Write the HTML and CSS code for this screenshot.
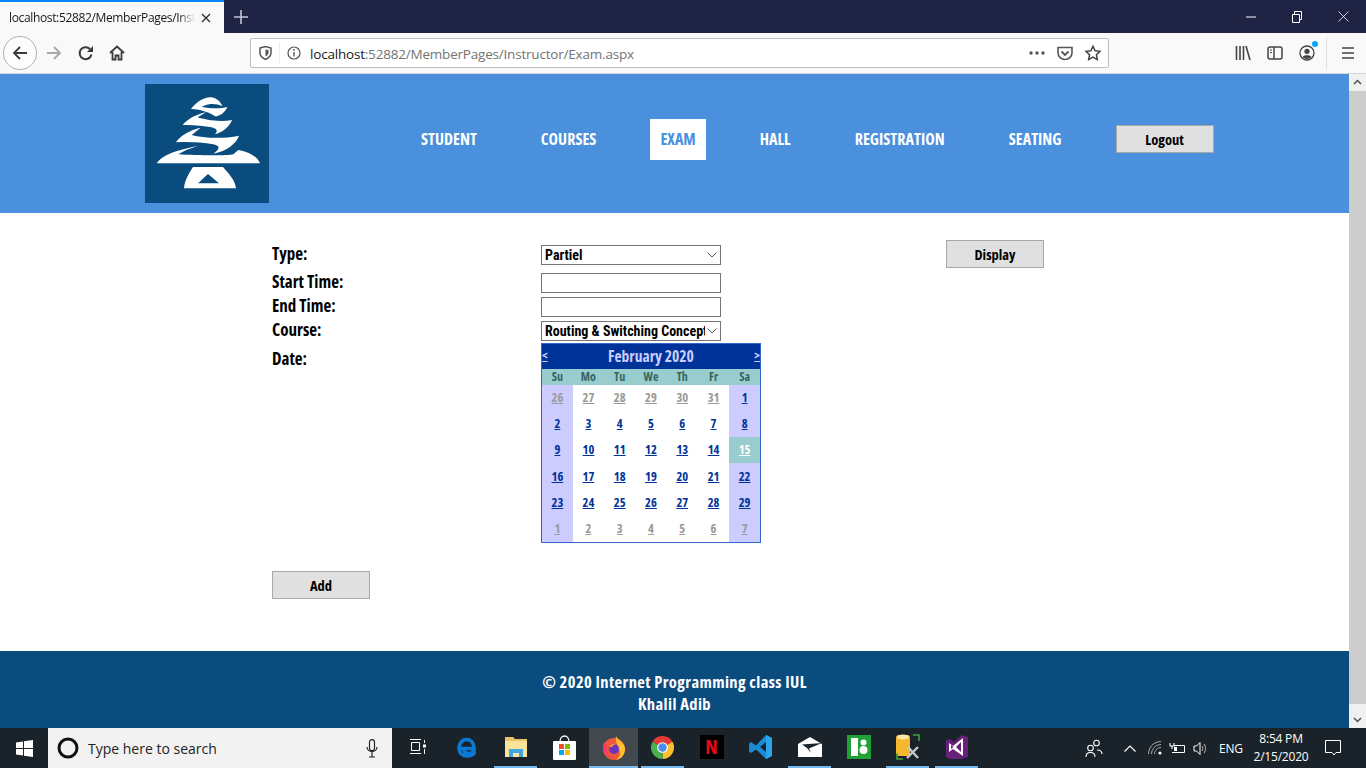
FILE: index.html
```html
<!DOCTYPE html>
<html lang="en">
<head>
    <meta charset="UTF-8">
    <title>Exam</title>
    <link rel="stylesheet" href="styles.css">
</head>
<body>
    <!-- Browser tabs -->
    <div class="tabstrip">
        <div class="browser-tab">
            <span class="tab-title">localhost:52882/MemberPages/Inst</span>
            <svg class="tab-close" width="10" height="10" viewBox="0 0 10 10"><path d="M1 1l8 8M9 1l-8 8" stroke="#333" stroke-width="1.4"/></svg>
        </div>
        <svg class="new-tab" width="14" height="14" viewBox="0 0 14 14"><path d="M7 0v14M0 7h14" stroke="#c4c6d2" stroke-width="1.6"/></svg>
        <div class="window-controls">
            <svg width="10" height="10" viewBox="0 0 10 10"><path d="M0 5h10" stroke="#fff"/></svg>
            <svg width="10" height="12" viewBox="0 0 10 12"><path d="M.5 3.5h7v8h-7zM2.500 3.500v-3h7v8h-2" fill="none" stroke="#fff"/></svg>
            <svg width="11" height="11" viewBox="0 0 11 11"><path d="M.5.500l10 10M10.500.500l-10 10" stroke="#fff" stroke-width=".8"/></svg>
        </div>
    </div>

    <!-- Browser toolbar -->
    <div class="toolbar">
        <div class="back-btn">
            <svg width="16" height="16" viewBox="0 0 16 16"><path d="M15 8H2M8 2L2 8l6 6" fill="none" stroke="#3a3a3c" stroke-width="1.800"/></svg>
        </div>
        <svg class="forward-icon" width="16" height="16" viewBox="0 0 16 16"><path d="M1 8h13M8 2l6 6-6 6" fill="none" stroke="#a8a8aa" stroke-width="1.800"/></svg>
        <svg class="reload-icon" width="16" height="16" viewBox="0 0 16 16"><path d="M13.500 9.500A6 6 0 1 1 12 4" fill="none" stroke="#3a3a3c" stroke-width="2"/><path d="M15 1v6H9z" fill="#3a3a3c"/></svg>
        <svg class="home-icon" width="16" height="16" viewBox="0 0 16 16"><path d="M1 8l7-6.500L15 8M3.500 7v7.500h3v-4h3v4h3V7" fill="none" stroke="#3a3a3c" stroke-width="1.800"/></svg>
        <div class="urlbar">
            <svg class="shield-icon" width="13" height="14" viewBox="0 0 13 14"><path d="M1 2l5.500-1.500L12 2v5c0 3-2.500 5-5.500 6.500C3.500 12 1 10 1 7z" fill="none" stroke="#555" stroke-width="1.500"/><path d="M6.500 3.500L9.500 4v3c0 1.500-1.300 2.700-3 3.500z" fill="#555"/></svg>
            <i class="url-sep"></i>
            <svg class="info-icon" width="14" height="14" viewBox="0 0 14 14"><circle cx="7" cy="7" r="6" fill="none" stroke="#555" stroke-width="1.200"/><path d="M7 6v4.500" stroke="#555" stroke-width="1.400"/><circle cx="7" cy="3.900" r=".9" fill="#555"/></svg>
            <span class="url-text"><b>localhost</b>:52882/MemberPages/Instructor/Exam.aspx</span>
            <span class="url-actions">
                <svg width="16" height="4" viewBox="0 0 16 4"><circle cx="2" cy="2" r="1.700" fill="#555"/><circle cx="8" cy="2" r="1.700" fill="#555"/><circle cx="14" cy="2" r="1.700" fill="#555"/></svg>
                <svg width="16" height="15" viewBox="0 0 16 15"><path d="M1 1.500h14V7c0 3.500-3.500 6.500-7 6.500S1 10.500 1 7z" fill="none" stroke="#555" stroke-width="1.600"/><path d="M4.500 5.500L8 9l3.500-3.500" fill="none" stroke="#555" stroke-width="1.800"/></svg>
                <svg width="16" height="16" viewBox="0 0 16 16"><path d="M8 1.200l2.100 4.500 4.900.6-3.600 3.400.9 4.900L8 12.200l-4.300 2.400.9-4.900L1 6.300l4.900-.6z" fill="none" stroke="#444" stroke-width="1.500"/></svg>
            </span>
        </div>
        <div class="toolbar-right">
            <svg width="16" height="16" viewBox="0 0 16 16"><path d="M1.500 1v14M5 1v14M8.500 1v14M11 1l4 14" fill="none" stroke="#444" stroke-width="1.600"/></svg>
            <svg width="16" height="16" viewBox="0 0 16 16"><rect x="1" y="2" width="14" height="12" rx="2" fill="none" stroke="#444" stroke-width="1.500"/><path d="M7 2v12" stroke="#444" stroke-width="1.500"/><path d="M3 5h2M3 7.500h2" stroke="#444"/></svg>
            <span class="account-icon">
                <svg width="16" height="16" viewBox="0 0 16 16"><circle cx="8" cy="8" r="7" fill="none" stroke="#444" stroke-width="1.300"/><circle cx="8" cy="6.300" r="2.600" fill="#444"/><path d="M3.500 12c1-2.500 8-2.500 9 0-2 2.500-7 2.500-9 0z" fill="#444"/></svg>
                <i class="account-dot"></i>
            </span>
            <i class="toolbar-sep"></i>
            <svg width="14" height="14" viewBox="0 0 14 14"><path d="M1 2h12M1 7h12M1 12h12" stroke="#444" stroke-width="1.700"/></svg>
        </div>
    </div>

    <div class="viewport">
        <div class="page">
            <header class="site-header">
                <svg class="logo" viewBox="45 27 372 357">
                    <rect x="45" y="27" width="372" height="357" fill="#0b4c7f"/>
                    <g fill="#fff">
                        <path d="M183 102C200 80 225 64 245 67 262 70 272 82 277 93 262 87 240 84 222 92L215 96C240 100 270 102 292 96 285 112 270 124 255 124 245 115 215 103 183 102Z"/>
                        <path d="M158 150C175 130 200 118 228 112L203 127C222 134 270 142 306 135 300 152 280 172 255 178 264 168 262 162 245 157 220 152 190 149 158 150Z"/>
                        <path d="M138 202C150 182 180 165 212 158L185 180C220 190 280 192 327 182 320 205 290 228 250 236 270 222 272 213 250 208 215 202 175 200 138 202Z"/>
                        <path d="M80 265C95 240 140 225 205 212 175 222 155 230 145 238 195 241 290 243 310 238L325 225C360 232 382 245 390 265Z"/>
                        <path fill-rule="evenodd" d="M162 340C164 316 176 296 189 276H279C296 296 316 316 318 340ZM204 325H267L234 297Z"/>
                    </g>
                </svg>
                <nav class="main-nav">
                    <a class="nav-link">STUDENT</a>
                    <a class="nav-link">COURSES</a>
                    <a class="nav-link active">EXAM</a>
                    <a class="nav-link">HALL</a>
                    <a class="nav-link">REGISTRATION</a>
                    <a class="nav-link">SEATING</a>
                    <button class="btn logout-btn">Logout</button>
                </nav>
            </header>

            <main class="content">
                <form class="exam-form">
                    <label class="field-label">Type:</label>
                    <select class="field select-field"><option>Partiel</option></select>
                    <button type="button" class="btn display-btn">Display</button>

                    <label class="field-label">Start Time:</label>
                    <input class="field" type="text">
                    <span></span>

                    <label class="field-label">End Time:</label>
                    <input class="field" type="text">
                    <span></span>

                    <label class="field-label">Course:</label>
                    <select class="field"><option>Routing &amp; Switching Concepts</option></select>
                    <span></span>

                    <label class="field-label date-label">Date:</label>
                    <table class="calendar">
                        <thead>
                            <tr class="cal-title">
                                <th><a>&lt;</a></th>
                                <th colspan="5">February 2020</th>
                                <th class="cal-next"><a>&gt;</a></th>
                            </tr>
                            <tr class="cal-days">
                                <th>Su</th><th>Mo</th><th>Tu</th><th>We</th><th>Th</th><th>Fr</th><th>Sa</th>
                            </tr>
                        </thead>
                        <tbody>
                            <tr>
                                <td class="weekend other"><a>26</a></td><td class="other"><a>27</a></td><td class="other"><a>28</a></td><td class="other"><a>29</a></td><td class="other"><a>30</a></td><td class="other"><a>31</a></td><td class="weekend"><a>1</a></td>
                            </tr>
                            <tr>
                                <td class="weekend"><a>2</a></td><td><a>3</a></td><td><a>4</a></td><td><a>5</a></td><td><a>6</a></td><td><a>7</a></td><td class="weekend"><a>8</a></td>
                            </tr>
                            <tr>
                                <td class="weekend"><a>9</a></td><td><a>10</a></td><td><a>11</a></td><td><a>12</a></td><td><a>13</a></td><td><a>14</a></td><td class="today"><a>15</a></td>
                            </tr>
                            <tr>
                                <td class="weekend"><a>16</a></td><td><a>17</a></td><td><a>18</a></td><td><a>19</a></td><td><a>20</a></td><td><a>21</a></td><td class="weekend"><a>22</a></td>
                            </tr>
                            <tr>
                                <td class="weekend"><a>23</a></td><td><a>24</a></td><td><a>25</a></td><td><a>26</a></td><td><a>27</a></td><td><a>28</a></td><td class="weekend"><a>29</a></td>
                            </tr>
                            <tr>
                                <td class="weekend other"><a>1</a></td><td class="other"><a>2</a></td><td class="other"><a>3</a></td><td class="other"><a>4</a></td><td class="other"><a>5</a></td><td class="other"><a>6</a></td><td class="weekend other"><a>7</a></td>
                            </tr>
                        </tbody>
                    </table>
                </form>
                <button class="btn add-btn">Add</button>
            </main>

            <footer class="site-footer">
                <p>© 2020 Internet Programming class IUL</p>
                <p>Khalil Adib</p>
            </footer>
        </div>

        <div class="scrollbar">
            <svg class="scroll-arrow" width="17" height="17" viewBox="0 0 17 17"><path d="M5 10l3.500-3.500L12 10" fill="none" stroke="#505050" stroke-width="1.500"/></svg>
            <div class="scroll-thumb"></div>
            <svg class="scroll-arrow" width="17" height="17" viewBox="0 0 17 17"><path d="M5 7l3.500 3.500L12 7" fill="none" stroke="#505050" stroke-width="1.500"/></svg>
        </div>
    </div>

    <!-- Windows taskbar -->
    <div class="taskbar">
        <div class="start-btn">
            <svg width="17" height="17" viewBox="0 0 17 17"><path d="M0 2.500l7-1V8H0zM8 1.300L17 0v8H8zM0 9h7v6.500l-7-1zM8 9h9v8l-9-1.300z" fill="#fff"/></svg>
        </div>
        <div class="search-box">
            <svg width="22" height="22" viewBox="0 0 22 22"><circle cx="11" cy="11" r="9" fill="none" stroke="#111" stroke-width="3"/></svg>
            <span class="search-text">Type here to search</span>
            <svg class="mic-icon" width="12" height="19" viewBox="0 0 12 19"><rect x="3.500" y=".700" width="5" height="11" rx="2.500" fill="none" stroke="#222" stroke-width="1.200"/><path d="M1 8c0 6 10 6 10 0M6 13v5M3 18h6" fill="none" stroke="#222" stroke-width="1.200"/></svg>
        </div>
        <div class="app-slot">
            <svg width="16" height="16" viewBox="0 0 16 16"><path d="M0 .500h11M1.500 3.500h8v8h-8zM0 14.500h11M14.500 1v3M14.500 10v5" fill="none" stroke="#fff"/><rect x="13" y="5.500" width="3" height="3" fill="#fff"/></svg>
        </div>
        <div class="app-slot">
            <svg width="20" height="21" viewBox="0 0 20 21"><path d="M3 11.500h14C17 6 14 2.500 9.500 2.500 5 2.500 2 6.500 2 11c0 5 3.500 8 8.500 8 3 0 5-1 6.500-2.500V14c-2 2-3.500 2.500-5.500 2.500-3 0-5-2-5-5" fill="none" stroke="#0a78d7" stroke-width="3.600"/></svg>
        </div>
        <div class="app-slot running">
            <svg width="22" height="20" viewBox="0 0 22 20"><path d="M0 0h8l2 2h12v18H0z" fill="#e8c56a"/><path d="M0 4h22v16H0z" fill="#fbe39a"/><path d="M4 20v-8h14v8h-4v-4H8v4z" fill="#3fa7e1"/></svg>
        </div>
        <div class="app-slot">
            <svg width="23" height="25" viewBox="0 0 23 25"><path d="M7 7c0-8 9-8 9 0" fill="none" stroke="#fff" stroke-width="1.300"/><rect y="6" width="23" height="19" rx="1" fill="#fff"/><path d="M6 9h5v5H6z" fill="#f25022"/><path d="M12 9h5v5h-5z" fill="#7fba00"/><path d="M6 15h5v5H6z" fill="#00a4ef"/><path d="M12 15h5v5h-5z" fill="#ffb900"/></svg>
        </div>
        <div class="app-slot running active">
            <svg width="24" height="25" viewBox="0 0 24 25"><circle cx="12" cy="14" r="11" fill="#f0563c"/><path d="M14 1c1 4 9 6 9 13 0 6-4 10-9 11 4-3 5-7 3-11C15 9 13 6 14 1z" fill="#ffc02e"/><path d="M2 7c-2 5-1 13 7 16-3-2-5-6-4-10z" fill="#f7386b"/><circle cx="12" cy="14" r="5" fill="#6a33c2"/><path d="M7 12c1-3 6-4 8-3-2 0-4 1-5 3z" fill="#ff9a2e"/></svg>
        </div>
        <div class="app-slot running">
            <svg width="23" height="23" viewBox="0 0 24 24"><path d="M12 12L1.600 6A12 12 0 0 1 22.400 6z" fill="#e53935"/><path d="M12 12L22.400 6A12 12 0 0 1 12 24z" fill="#fbc02d"/><path d="M12 12V24A12 12 0 0 1 1.600 6z" fill="#4caf50"/><circle cx="12" cy="12" r="5.600" fill="#fff"/><circle cx="12" cy="12" r="4.400" fill="#4a8bf0"/></svg>
        </div>
        <div class="app-slot">
            <span class="netflix-tile">N</span>
        </div>
        <div class="app-slot">
            <svg width="24" height="24" viewBox="0 0 24 24"><path d="M17 0l6 3v18l-6 3-10-9.500-5 3.500-2-1.500V8.500L2 7l5 3.500zM17 7l-6 5 6 5z" fill="#1b8ad4" fill-rule="evenodd"/><path d="M17 0l6 3v18l-6 3z" fill="#2aa4ea"/></svg>
        </div>
        <div class="app-slot running">
            <svg width="24" height="20" viewBox="0 0 24 20"><path d="M0 7L12 0l12 7v13H0z" fill="#fff"/><path d="M4 7.500L24 6 11 11.500 13 16 9 11z" fill="#1c2429"/></svg>
        </div>
        <div class="app-slot">
            <svg width="24" height="24" viewBox="0 0 24 24"><rect width="24" height="24" fill="#21a038"/><rect x="4" y="3" width="7" height="18" fill="#fff"/><circle cx="16.500" cy="7.500" r="3" fill="#fff"/><circle cx="16.500" cy="15" r="4" fill="#fff"/></svg>
        </div>
        <div class="app-slot running">
            <svg width="24" height="26" viewBox="0 0 24 26"><rect x="0" y="1" width="14" height="21" rx="3" fill="#f5b82e"/><ellipse cx="7" cy="3" rx="6" ry="2.500" fill="#fde6a6"/><path d="M17 1h6v6M1 19v6h6" fill="none" stroke="#3ba640" stroke-width="1.500"/><path d="M11 24l11-11M12 13l10 11" stroke="#c8c8c8" stroke-width="2.400"/></svg>
        </div>
        <div class="app-slot running">
            <svg width="22" height="24" viewBox="0 0 22 24"><path d="M0 5l4-1 4 3 8-7 6 2v20l-6 2H4l-4-2z" fill="#68217a"/><path fill-rule="evenodd" d="M3 8l4 3L17 3v18L7 14l-4 3zM5 10v4l2.500-2zM15 7l-5 5 5 5z" fill="#fff"/></svg>
        </div>

        <div class="tray">
            <svg class="tray-people" width="18" height="19" viewBox="0 0 18 19"><circle cx="11.500" cy="4" r="2.800" fill="none" stroke="#fff" stroke-width="1.100"/><circle cx="5.500" cy="9" r="2.800" fill="none" stroke="#fff" stroke-width="1.100"/><path d="M1 18c0-6 9-6 9 0M12 11c3 0 5 1 5 4" fill="none" stroke="#fff" stroke-width="1.100"/></svg>
            <svg class="tray-caret" width="12" height="7" viewBox="0 0 12 7"><path d="M.5 6.500L6 1l5.500 5.500" fill="none" stroke="#fff" stroke-width="1.200"/></svg>
            <svg class="tray-wifi" width="14" height="14" viewBox="0 0 14 14"><path d="M.5 13C.5 6 6 .5 13 .5M3.500 13c0-5 4.500-9.500 9.500-9.500M6.500 13c0-3.500 3-6.500 6.500-6.500" fill="none" stroke="#bbb" stroke-width=".9"/><circle cx="12" cy="12" r="1.600" fill="#fff"/></svg>
            <svg class="tray-battery" width="17" height="13" viewBox="0 0 17 13"><path d="M5 3.500h10.500v7H3" fill="none" stroke="#fff"/><path d="M1 1v3h4V1M3 4v3" fill="none" stroke="#fff" stroke-width="1.100"/><rect x="5" y="5" width="3" height="4" fill="#fff"/></svg>
            <svg class="tray-sound" width="15" height="15" viewBox="0 0 15 15"><path d="M1 5h2.500L7 1.500v12L3.500 10H1z" fill="none" stroke="#fff"/><path d="M9 5c1 1.500 1 3.500 0 5M11 3c2 2.500 2 6.500 0 9" fill="none" stroke="#bbb"/></svg>
            <span class="tray-lang">ENG</span>
            <div class="tray-clock">
                <span>8:54 PM</span>
                <span>2/15/2020</span>
            </div>
            <svg class="tray-notify" width="16" height="16" viewBox="0 0 16 16"><path d="M.5.500h15v12H11L9 15l-2-2.500H.5z" fill="none" stroke="#fff"/></svg>
        </div>
    </div>
</body>
</html>
```

FILE: styles.css
```css
* {
    margin: 0;
    padding: 0;
    box-sizing: border-box;
}

html, body {
    height: 100%;
    overflow: hidden;
}

body {
    display: flex;
    flex-direction: column;
    width: 1366px;
    height: 768px;
    font-family: "Open Sans", sans-serif;
    background: #fff;
}

svg {
    display: block;
    flex: none;
}

/* Browser chrome */
.tabstrip {
    display: flex;
    align-items: center;
    height: 33px;
    background: #1f2344;
}

.browser-tab {
    display: flex;
    align-items: center;
    width: 224px;
    height: 33px;
    padding: 0 12px 0 9px;
    background: #f9f9fa;
    border-top: 2px solid #0a84ff;
}

.tab-title {
    width: 186px;
    font-size: 12px;
    letter-spacing: -.35px;
    color: #18181a;
    white-space: nowrap;
    -webkit-mask-image: linear-gradient(to right, #000 170px, transparent 186px);
    mask-image: linear-gradient(to right, #000 170px, transparent 186px);
}

.tab-close {
    margin-left: 6px;
}

.new-tab {
    margin-left: 10px;
}

.window-controls {
    display: flex;
    align-items: center;
    gap: 36px;
    margin-left: auto;
    padding-right: 17px;
}

.toolbar {
    display: flex;
    align-items: center;
    height: 41px;
    padding-left: 3px;
    background: #f9f9fa;
    border-bottom: 1px solid #d6d6d8;
}

.back-btn {
    display: flex;
    align-items: center;
    justify-content: center;
    width: 34px;
    height: 34px;
    border: 1px solid #b1b1b3;
    border-radius: 50%;
    background: #fdfdfd;
}

.forward-icon {
    margin-left: 9px;
}

.reload-icon {
    margin-left: 16px;
}

.home-icon {
    margin-left: 15px;
}

.urlbar {
    display: flex;
    align-items: center;
    width: 859px;
    height: 30px;
    margin-left: 125px;
    padding: 0 7px 0 8px;
    background: #fff;
    border: 1px solid #bebebe;
    border-radius: 2px;
}

.shield-icon {
    margin-right: 7px;
}

.url-sep {
    width: 1px;
    height: 22px;
    margin-right: 7px;
    background: #ececec;
}

.info-icon {
    margin-right: 9px;
}

.url-text {
    padding-top: 1px;
    font-size: 13.500px;
    letter-spacing: -.2px;
    color: #737373;
    white-space: nowrap;
}

.url-text b {
    font-weight: 400;
    color: #18181a;
}

.url-actions {
    display: flex;
    align-items: center;
    gap: 12px;
    margin-left: auto;
}

.toolbar-right {
    display: flex;
    align-items: center;
    gap: 16px;
    margin-left: 126px;
}

.account-icon {
    position: relative;
}

.account-dot {
    position: absolute;
    top: -4px;
    right: -3px;
    width: 6px;
    height: 6px;
    border-radius: 50%;
    background: #0aa5ff;
}

.toolbar-sep {
    width: 1px;
    height: 32px;
    margin: 0 -2px 0 -5px;
    background: #e0e0e2;
}

/* Page */
.viewport {
    display: flex;
    height: 654px;
}

.page {
    display: flex;
    flex-direction: column;
    flex: 1;
    min-width: 0;
    font-stretch: 75%;
}

.site-header {
    display: flex;
    height: 139px;
    padding: 10px 0 0 145px;
    background: #4a90dd;
}

.logo {
    width: 124px;
    height: 119px;
}

.main-nav {
    display: flex;
    align-items: center;
    height: 41px;
    margin: 35px 0 0 120px;
}

.nav-link {
    display: flex;
    align-items: center;
    height: 41px;
    margin: 0 22px;
    padding: 0 10px 2px;
    font-size: 16px;
    font-weight: 700;
    letter-spacing: .05px;
    color: #fff;
}

.nav-link.active {
    background: #fff;
    color: #4a90dd;
}

.btn {
    display: block;
    width: 98px;
    height: 28px;
    background: #e0e0e0;
    border: 1px solid #a8a8a8;
    font-family: inherit;
    font-stretch: inherit;
    font-size: 14.500px;
    font-weight: 700;
    color: #000;
}

.logout-btn {
    margin: 0 0 2px 22px;
    padding-top: 2px;
}

.content {
    flex: 1;
    padding: 27px 0 0 272px;
}

.exam-form {
    display: grid;
    grid-template-columns: 269px 405px 98px;
    grid-template-rows: 31px 24px 24px 24px auto;
    align-items: center;
}

.field-label {
    padding-bottom: 3px;
    font-size: 17px;
    font-weight: 700;
    color: #000;
}

.exam-form .field-label:first-child {
    align-self: start;
    margin-top: 2px;
}

.date-label {
    align-self: start;
    margin-top: 4px;
}

.field {
    width: 180px;
    height: 20px;
    padding: 0 3px;
    background: #fff;
    border: 1px solid #767676;
    border-radius: 0;
    font-family: Roboto, sans-serif;
    font-stretch: 75%;
    font-size: 14px;
    font-weight: 700;
    color: #000;
}

select.field {
    appearance: none;
    padding: 0 15px 0 3px;
    background: #fff url("data:image/svg+xml,%3Csvg xmlns='http://www.w3.org/2000/svg' width='10' height='6'%3E%3Cpath d='M.5.500l4.500 4.500 4.500-4.500' fill='none' stroke='%23555'/%3E%3C/svg%3E") no-repeat right 3px center;
}

.select-field {
    align-self: start;
    margin-top: 5px;
}

.display-btn {
    align-self: start;
}

.calendar {
    width: 220px;
    height: 200px;
    table-layout: fixed;
    border-collapse: collapse;
    border: 1px solid #3366cc;
    font-size: 12.500px;
    text-align: center;
}

.calendar a {
    text-decoration: underline;
    color: #003399;
}

.cal-title {
    height: 25px;
    background: #003399;
    font-size: 15.500px;
    line-height: 20px;
    color: #ccccff;
}

.cal-title a {
    display: block;
    font-size: 12px;
    text-align: left;
    color: #ccccff;
}

.cal-title .cal-next a {
    text-align: right;
}

.cal-days {
    background: #99cccc;
    font-size: 12px;
    line-height: 14px;
    color: #336666;
}

.cal-days th {
    height: 16px;
}

.calendar td {
    height: 26px;
    font-weight: 700;
    line-height: 20px;
}

.calendar .weekend {
    background: #ccccff;
}

.calendar .other a {
    color: #999;
}

.calendar .today {
    background: #99cccc;
}

.calendar .today a {
    color: #fff;
}

.add-btn {
    margin-top: 28px;
}

.site-footer {
    height: 77px;
    padding-top: 20px;
    background: #0b4c7f;
    font-size: 16.500px;
    font-weight: 700;
    letter-spacing: .4px;
    line-height: 22px;
    text-align: center;
    color: #fff;
}

.scrollbar {
    display: flex;
    flex-direction: column;
    width: 17px;
    background: #f0f0f0;
}

.scroll-thumb {
    flex: 1;
    margin-bottom: 7px;
    background: #cdcdcd;
}

/* Taskbar */
.taskbar {
    display: flex;
    align-items: center;
    height: 40px;
    background: #1a2329;
}

.start-btn {
    display: flex;
    align-items: center;
    justify-content: center;
    width: 48px;
    height: 40px;
}

.search-box {
    display: flex;
    align-items: center;
    width: 344px;
    height: 40px;
    margin-right: 1px;
    padding: 0 14px 0 9px;
    background: #f2f2f2;
}

.search-text {
    margin-left: 9px;
    font-size: 14px;
    color: #222;
}

.mic-icon {
    margin-left: auto;
}

.app-slot {
    display: flex;
    align-items: center;
    justify-content: center;
    width: 49px;
    height: 40px;
    border-bottom: 2px solid transparent;
}

.app-slot.running {
    border-image: linear-gradient(to right, transparent 4px, #76b9ed 4px, #76b9ed 45px, transparent 45px) 1;
}

.app-slot.active {
    border-image: none;
    border-bottom-color: #76b9ed;
    background: #42494e;
}

.netflix-tile {
    display: flex;
    align-items: center;
    justify-content: center;
    width: 24px;
    height: 24px;
    background: #000;
    font-size: 20px;
    font-weight: 700;
    font-stretch: 75%;
    line-height: 24px;
    color: #e50914;
}

.tray {
    display: flex;
    align-items: center;
    margin-left: auto;
    height: 40px;
    color: #fff;
}

.tray-caret {
    margin-left: 21px;
}

.tray-wifi {
    margin-left: 12px;
}

.tray-battery {
    margin-left: 7px;
}

.tray-sound {
    margin-left: 7px;
}

.tray-lang {
    width: 24px;
    margin-left: 11px;
    font-size: 12px;
    letter-spacing: -.2px;
    white-space: nowrap;
}

.tray-clock {
    display: flex;
    flex-direction: column;
    align-items: center;
    width: 66px;
    margin-left: 5px;
    font-size: 12px;
    letter-spacing: -.2px;
    line-height: 18px;
}

.tray-notify {
    margin: 0 25px 0 11px;
}
```
